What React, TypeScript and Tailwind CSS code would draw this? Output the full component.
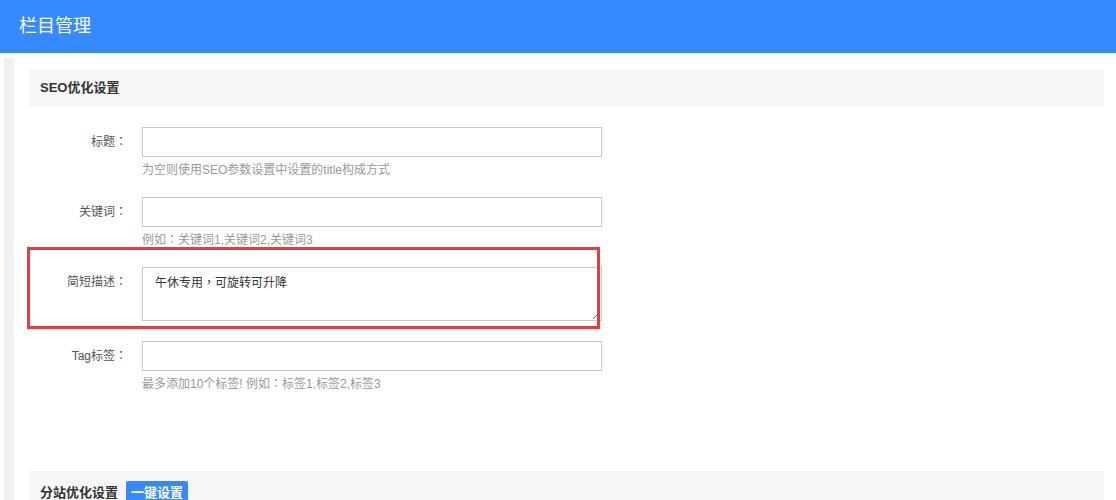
import React from "react";

const font = { fontFamily: '"Liberation Sans", "Noto Sans CJK SC", sans-serif' };
const tc = { fontFamily: '"Noto Sans CJK TC", sans-serif' };

function C() {
  return <span style={tc} className="leading-none">：</span>;
}

function Row({ label, hint, children, top = false }: { label: string; hint?: React.ReactNode; children: React.ReactNode; top?: boolean }) {
  return (
    <div className="flex">
      <div className={`w-[113px] shrink-0 pr-[15px] text-right text-[12px] text-[#555] ${top ? "pt-[6px] leading-[18px]" : "h-[30px] leading-[30px]"}`}>
        {label}
        <C />
      </div>
      <div className="flex flex-col">
        {children}
        {hint && <div className="mt-[4px] h-[18px] text-[12px] leading-[18px] text-[#999]">{hint}</div>}
      </div>
    </div>
  );
}

export default function App() {
  return (
    <div style={font} className="w-[1116px] h-[500px] overflow-hidden bg-white">
      <div className="h-[53px] bg-[#368aff] flex items-center pl-[19px] text-white text-[18px]">栏目管理</div>
      <div className="flex pt-[5px] pl-[4px] h-[447px]">
        <div className="w-[10px] bg-[#f0f0f0] shrink-0" />
        <div className="flex-1 pl-[15px] pr-[12px] pt-[11px] relative">
          <div className="h-[38px] bg-[#f6f6f6] px-[11px] flex items-center font-bold text-[13px] text-[#333]">SEO优化设置</div>
          <div className="pt-[20px] flex flex-col">
            <Row label="标题" hint="为空则使用SEO参数设置中设置的title构成方式">
              <input className="w-[460px] h-[30px] border border-[#c9c9c9] outline-none" />
            </Row>
            <div className="h-[18px]" />
            <Row label="关键词" hint={<>例如<C />关键词1,关键词2,关键词3</>}>
              <input className="w-[460px] h-[30px] border border-[#c9c9c9] outline-none" />
            </Row>
            <div className="h-[18px]" />
            <Row label="简短描述" top>
              <textarea
                defaultValue="午休专用，可旋转可升降"
                style={tc}
                className="w-[460px] h-[54px] border border-[#c9c9c9] outline-none px-[12px] pt-[5px] text-[12px] leading-[18px] text-[#333] block"
              />
            </Row>
            <div className="h-[20px]" />
            <Row label="Tag标签" hint={<>最多添加10个标签! 例如<C />标签1,标签2,标签3</>}>
              <input className="w-[460px] h-[30px] border border-[#c9c9c9] outline-none" />
            </Row>
          </div>
          <div className="absolute left-[13px] top-[189px] w-[573px] h-[82px] border-[3px] border-[#f0373b] pointer-events-none" />
          <div className="mt-[78px] h-[40px] bg-[#f6f6f6] px-[11px] flex items-start pt-[10px] gap-[8px] font-bold text-[13px] text-[#333]">
            <span className="leading-[24px]">分站优化设置</span>
            <span className="bg-[#368aff] text-white px-[5px] h-[24px] leading-[24px] rounded-[2px]">一键设置</span>
          </div>
        </div>
      </div>
    </div>
  );
}
